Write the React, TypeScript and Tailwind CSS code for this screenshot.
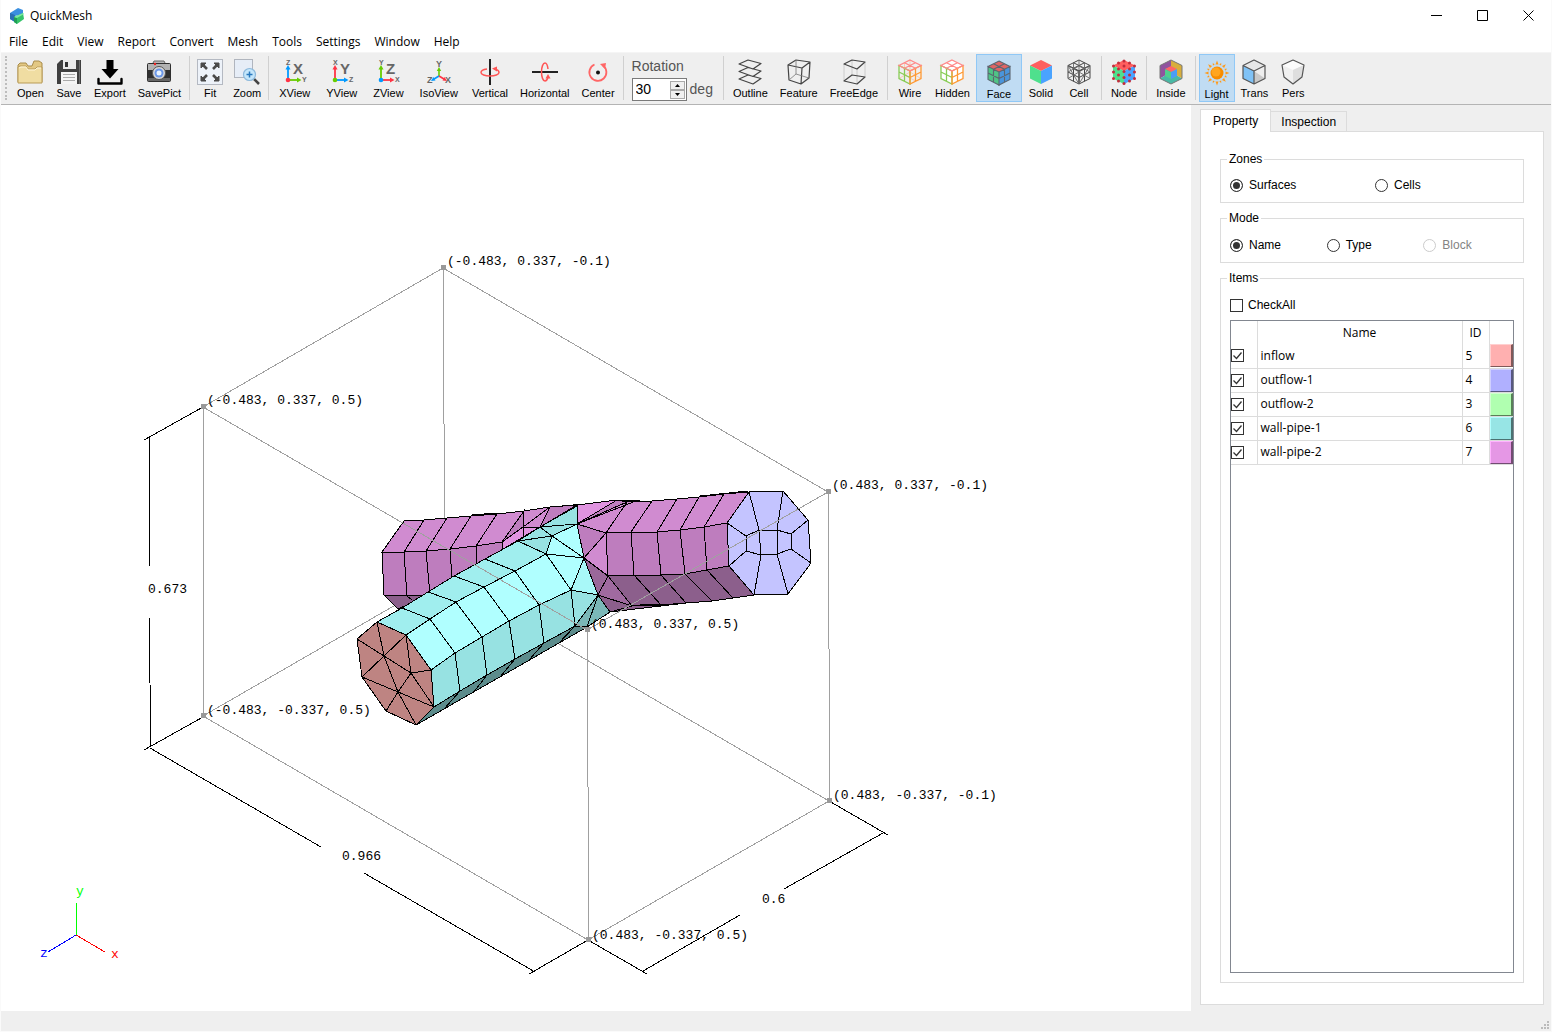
import { useState } from "react";
import type { ReactNode } from "react";
import clsx from "clsx";

const menus = ["File", "Edit", "View", "Report", "Convert", "Mesh", "Tools", "Settings", "Window", "Help"];

function Icon({ children }: { children: ReactNode }) {
  return (
    <svg viewBox="0 0 26 26" className="size-[26px] shrink-0" fill="none" aria-hidden>
      {children}
    </svg>
  );
}

/* ---------- file icons ---------- */

function OpenIcon() {
  return (
    <Icon>
      <path d="M1 23V6l2-2h6l2 3h4l2-5h5l3 2v19z" fill="#e3c883" stroke="#a98c4a" />
      <path d="M1 24V8l2-1h6l2 3h7l2-2h5v16z" fill="#f0dda2" stroke="#b99b57" />
      <path d="M2 9l2-1h5l2 3h7l2-2h4" stroke="#fff6d8" />
    </Icon>
  );
}

function SaveIcon() {
  return (
    <Icon>
      <path d="M5 1h20v24H1V5z" fill="#3f3f3f" />
      <path d="M7 1h13v9H7z" fill="#e9e9e9" />
      <path d="M9 3h3v5H9z" fill="#333" />
      <path d="M5 13h16v12H5z" fill="#f4f4f4" />
      <path d="M7 15.500h12M7 18.500h12M7 21.500h12" stroke="#aaa" />
      <path d="M23.500 1v24" stroke="#6a6a6a" />
    </Icon>
  );
}

function ExportIcon() {
  return (
    <Icon>
      <path d="M9.500 1h7v9h5L13 19.500 4.500 10h5z" fill="#000" />
      <path d="M1.500 20v4.500h23V20" stroke="#000" strokeWidth="2.400" strokeLinejoin="round" strokeLinecap="round" />
    </Icon>
  );
}

function CameraIcon() {
  return (
    <Icon>
      <path d="M8 2h10l2 4H6z" fill="#b8b8b8" stroke="#666" />
      <rect x="1" y="4" width="24" height="19" rx="2" fill="#2f2f2f" />
      <path d="M2 5h22v6H2z" fill="#b2b2b2" />
      <path d="M2 19h22v3H2z" fill="#666" />
      <circle cx="13" cy="14" r="6.500" fill="#d8d8d8" stroke="#555" />
      <circle cx="13" cy="14" r="4.500" fill="#6b97e8" />
      <circle cx="13" cy="14" r="2.500" fill="#e8f3ff" />
      <circle cx="9" cy="5" r="1.200" fill="#e22" />
    </Icon>
  );
}

function FitIcon() {
  return (
    <Icon>
      <rect x="0.500" y="0.500" width="25" height="25" fill="#edf2f9" stroke="#b4b9c2" />
      <g fill="#4a4a4a" stroke="#4a4a4a">
        <path d="M5 5l5 5M21 5l-5 5M5 21l5-5M21 21l-5-5" strokeWidth="2.600" />
        <path d="M4 4h5L4 9zM22 4v5l-5-5zM4 22v-5l5 5zM22 22h-5l5-5z" />
      </g>
    </Icon>
  );
}

function ZoomIcon() {
  return (
    <Icon>
      <rect x="0.500" y="0.500" width="18" height="18" fill="#e6edf7" stroke="#b0b5be" />
      <path d="M20 20l5 5" stroke="#444" strokeWidth="2.500" />
      <circle cx="15.500" cy="15.500" r="6" fill="#c4e6fb" stroke="#8db9dc" strokeWidth="1.200" />
      <path d="M15.500 12.500v6M12.500 15.500h6" stroke="#2878bd" strokeWidth="1.500" />
    </Icon>
  );
}

/* ---------- view icons ---------- */

function AxisIcon({ up, main, side, upColor, sideColor, dot }: { up: string; main: string; side: string; upColor: string; sideColor: string; dot: string }) {
  return (
    <Icon>
      <path d="M6 20V9" stroke={upColor} strokeWidth="1.800" />
      <path d="M6 6l2.500 4.500h-5z" fill={upColor} />
      <path d="M6 21h10" stroke={sideColor} strokeWidth="1.800" />
      <path d="M19.500 21L15 18.500v5z" fill={sideColor} />
      <circle cx="6" cy="21" r="2.300" fill={dot} />
      <g fill="#666" fontFamily="Liberation Sans, sans-serif" fontWeight="bold">
        <text x="4" y="6" fontSize="7">{up}</text>
        <text x="11" y="15" fontSize="15">{main}</text>
        <text x="20" y="23" fontSize="7">{side}</text>
      </g>
    </Icon>
  );
}

function IsoIcon() {
  return (
    <Icon>
      <path d="M13 17V11" stroke="#6c0" strokeWidth="1.600" />
      <path d="M13 8l2.200 4h-4.400z" fill="#6c0" />
      <path d="M13 17l-5 3" stroke="#09f" strokeWidth="1.600" />
      <path d="M5 22l2.500-4 2 3.500z" fill="#09f" />
      <path d="M13 17l5 3" stroke="#f34" strokeWidth="1.600" />
      <path d="M21 22l-2.500-4-2 3.500z" fill="#f34" />
      <g fill="#666" fontFamily="Liberation Sans, sans-serif" fontWeight="bold" fontSize="9">
        <text x="10" y="8">Y</text>
        <text x="1" y="24">Z</text>
        <text x="19" y="24">X</text>
      </g>
    </Icon>
  );
}

function VerticalIcon() {
  return (
    <Icon>
      <path d="M13 0v26" stroke="#222" strokeWidth="2" />
      <path d="M10 10c-4 .5-6 2-6 3.500 0 2 4 3.500 9 3.500s9-1.500 9-3.500c0-1.500-2-3-5-3.500" stroke="#f55" strokeWidth="1.500" />
      <path d="M15 9.500l5-2v5z" fill="#f55" />
    </Icon>
  );
}

function HorizontalIcon() {
  return (
    <Icon>
      <path d="M0 13h26" stroke="#222" strokeWidth="2" />
      <path d="M16 10c-.5-4-1.500-6-3-6-2 0-3.500 4-3.500 9s1.500 9 3.500 9c1.500 0 2.500-2 3-4" stroke="#f55" strokeWidth="1.500" />
      <path d="M16 15l2.500 4.500h-5z" fill="#f55" />
    </Icon>
  );
}

function CenterIcon() {
  return (
    <Icon>
      <path d="M9.500 5.500A8.500 8.500 0 1 0 18 6.500" stroke="#f66" strokeWidth="1.800" />
      <path d="M15 5l6-1-1 6z" fill="#f66" />
      <circle cx="13" cy="13.500" r="2" fill="#111" />
    </Icon>
  );
}

/* ---------- display icons ---------- */

function OutlineIcon() {
  return (
    <Icon>
      <g stroke="#444" strokeWidth="1.200" strokeLinejoin="round">
        <path d="M2 5l9-4 13 3.500L16 10zM2 12.500l9-4 13 3.500-8 5.500zM2 20l9-4 13 3.500-8 5.500z" />
      </g>
    </Icon>
  );
}

function FeatureIcon() {
  return (
    <Icon>
      <g stroke="#444" strokeWidth="1.200" strokeLinejoin="round">
        <path d="M2 6l8-5 14 2-1 16-8 6-12-4zM2 6l14 3 8-6M16 9l-1 16" />
        <path d="M10 1v14l13 4M10 15l-7 6" stroke="#777" strokeWidth="0.800" />
      </g>
    </Icon>
  );
}

function FreeEdgeIcon() {
  return (
    <Icon>
      <path d="M3 5v17M24 3v15M16 10v15M11 1v15" stroke="#c4c4c4" strokeWidth="0.800" />
      <path d="M3 5l8-4 13 2-8 7zM3 22l8-6 13 2-8 7z" stroke="#444" strokeWidth="1.200" strokeLinejoin="round" />
    </Icon>
  );
}

const TOP = "M13 1l11 5.500L13 12 2 6.500z";
const LEFT = "M2 6.500L13 12v13L2 19.500z";
const RIGHT = "M24 6.500L13 12v13l11-5.500z";
const TOP_GRID = "M7.500 3.750l11 5.500M18.500 3.750l-11 5.500";
const LEFT_GRID = "M2 13l11 5.500M7.500 9.250v13";
const RIGHT_GRID = "M24 13l-11 5.500M18.500 9.250v13";

function WireIcon({ hidden }: { hidden?: boolean }) {
  return (
    <Icon>
      {hidden ? <path d="M13 1l11 5.500v13L13 25 2 19.500v-13z" fill="#fff" /> : null}
      {hidden ? null : <path d="M13 1v12l11 6.500M13 13L2 19.500M7.500 4v12l11 6" stroke="#fb9" strokeWidth="0.700" />}
      <path d={LEFT + LEFT_GRID} stroke="#8c5" strokeWidth="1.300" />
      <path d={RIGHT + RIGHT_GRID} stroke="#f93" strokeWidth="1.300" />
      <path d={TOP + TOP_GRID} stroke="#f88" strokeWidth="1.300" />
    </Icon>
  );
}

const nodePoints = [
  [13, 2], [7.5, 4], [18.5, 4], [2.5, 7], [13, 7], [23.5, 7],
  [7.5, 10], [18.5, 10], [13, 12.5], [2.5, 13], [23.5, 13], [7.5, 16],
  [18.5, 16], [13, 18.5], [2.5, 19.5], [23.5, 19.5], [7.5, 22], [18.5, 22], [13, 24.5],
];

function SolidCube({ grid, nodes }: { grid?: boolean; nodes?: boolean }) {
  return (
    <Icon>
      <path d={TOP} fill={grid ? "#e06464" : "#ff5f5f"} />
      <path d={LEFT} fill={grid ? "#4fc486" : "#4fe08d"} />
      <path d={RIGHT} fill={grid ? "#4a95dc" : "#4aa3ff"} />
      {grid ? <path d={TOP + LEFT + RIGHT + TOP_GRID + LEFT_GRID + RIGHT_GRID} stroke="#5b6670" strokeWidth="1.100" /> : null}
      {nodes ? (
        <g fill="#c22d3c">
          {nodePoints.map(([x, y]) => (
            <circle key={`${x}-${y}`} cx={x} cy={y} r="1.500" />
          ))}
        </g>
      ) : null}
    </Icon>
  );
}

function CellIcon() {
  return (
    <Icon>
      <path d={TOP + LEFT + RIGHT + TOP_GRID + LEFT_GRID + RIGHT_GRID} stroke="#444" strokeWidth="1" />
      <path d="M13 1v24M2 6.500L24 19.500M24 6.500L2 19.500M7.500 3.750v5.500M18.500 3.750v5.500M2 13l11-6 11 6M2 6.500l5.500 9.250L13 25l5.500-9.250L24 6.500" stroke="#666" strokeWidth="0.900" />
    </Icon>
  );
}

function InsideIcon() {
  return (
    <Icon>
      <path d="M2 6.500L13 1v12L2 19.500z" fill="#90539e" />
      <path d="M24 6.500L13 1v12l11 6.500z" fill="#d8ae3c" />
      <path d="M2 19.500L13 13l11 6.500L13 25z" fill="#48b9a5" />
      <path d="M13 7l6 3-6 3-6-3z" fill="#f66" />
      <path d="M7 10l6 3v7l-6-3z" fill="#4fd08d" />
      <path d="M19 10l-6 3v7l6-3z" fill="#4a9df5" />
      <path d="M13 1l11 5.500v13L13 25 2 19.500v-13z" stroke="#777" />
    </Icon>
  );
}

function LightIcon() {
  return (
    <Icon>
      <g fill="#ff9a1a">
        {Array.from({ length: 16 }, (_, i) => (
          <path key={i} d={i % 2 ? "M12 4.500L13 2l1 2.500z" : "M11.500 4.500L13 0.500l1.500 4z"} transform={`rotate(${i * 22.5} 13 13)`} />
        ))}
      </g>
      <circle cx="13" cy="13" r="6.500" fill="#f78c00" />
      <circle cx="12" cy="12" r="4.500" fill="#ffa51f" />
    </Icon>
  );
}

function TransIcon() {
  return (
    <Icon>
      <path d={TOP} fill="#e7e7e7" />
      <path d={LEFT} fill="#7fc2f6" />
      <path d={RIGHT} fill="#c9c9c9" />
      <path d="M13 12l11-5.500v13z" fill="#eee" />
      <path d={TOP + LEFT + RIGHT} stroke="#555" strokeWidth="1.200" strokeLinejoin="round" />
    </Icon>
  );
}

function PersIcon() {
  return (
    <Icon>
      <path d="M13 1l11 5-2 12-9 7-9-7L2 6z" fill="#f0f0f0" />
      <path d="M2 6l11-5 11 5-11 5z" fill="#fcfcfc" />
      <path d="M13 11v14l9-7 2-12z" fill="#dedede" />
      <path d="M13 1l11 5-2 12-9 7-9-7L2 6z" stroke="#555" strokeWidth="1.200" strokeLinejoin="round" />
    </Icon>
  );
}

type Tool = { label: string; icon: ReactNode; pad?: string };

const fileTools: Tool[] = [
  { label: "Open", icon: <OpenIcon /> },
  { label: "Save", icon: <SaveIcon /> },
  { label: "Export", icon: <ExportIcon /> },
  { label: "SavePict", icon: <CameraIcon /> },
];
const zoomTools: Tool[] = [
  { label: "Fit", icon: <FitIcon />, pad: "px-[4px]" },
  { label: "Zoom", icon: <ZoomIcon />, pad: "px-[4px]" },
];
const viewTools: Tool[] = [
  { label: "XView", icon: <AxisIcon up="Z" main="X" side="Y" upColor="#09f" sideColor="#6c0" dot="#f34" />, pad: "px-[7px]" },
  { label: "YView", icon: <AxisIcon up="X" main="Y" side="Z" upColor="#f34" sideColor="#09f" dot="#6c0" />, pad: "px-[7px]" },
  { label: "ZView", icon: <AxisIcon up="Y" main="Z" side="X" upColor="#6c0" sideColor="#f34" dot="#09f" />, pad: "px-[7px]" },
  { label: "IsoView", icon: <IsoIcon />, pad: "px-[7px]" },
  { label: "Vertical", icon: <VerticalIcon /> },
  { label: "Horizontal", icon: <HorizontalIcon /> },
  { label: "Center", icon: <CenterIcon /> },
];
const edgeTools: Tool[] = [
  { label: "Outline", icon: <OutlineIcon /> },
  { label: "Feature", icon: <FeatureIcon /> },
  { label: "FreeEdge", icon: <FreeEdgeIcon /> },
];
const faceTools: Tool[] = [
  { label: "Wire", icon: <WireIcon /> },
  { label: "Hidden", icon: <WireIcon hidden /> },
  { label: "Face", icon: <SolidCube grid />, pad: "px-[9px]" },
  { label: "Solid", icon: <SolidCube /> },
  { label: "Cell", icon: <CellIcon /> },
];
const lightTools: Tool[] = [
  { label: "Light", icon: <LightIcon />, pad: "px-[4px]" },
  { label: "Trans", icon: <TransIcon /> },
  { label: "Pers", icon: <PersIcon /> },
];

function ToolGroup({ tools, active, onPick }: { tools: Tool[]; active?: string; onPick?: (label: string) => void }) {
  return (
    <div className="flex">
      {tools.map((tool) => (
        <button
          key={tool.label}
          type="button"
          onClick={() => onPick?.(tool.label)}
          className={clsx(
            "flex h-[48px] flex-col items-center border text-[11px] leading-4",
            tool.pad ?? "px-[5px]",
            active === tool.label ? "border-[#90c8f6] bg-[#c0dcf3] pt-[5px]" : "border-transparent pt-[4px]",
          )}
        >
          {tool.icon}
          <span>{tool.label}</span>
        </button>
      ))}
    </div>
  );
}

function Separator({ tight }: { tight?: boolean }) {
  return <span className={clsx("h-[44px] w-px shrink-0 bg-[#d0d0d0]", tight ? "mx-[2px]" : "mx-[3px]")} aria-hidden />;
}

function RotationField() {
  const [angle, setAngle] = useState(30);

  return (
    <div className="flex flex-col pr-[7px] pl-[6px] text-[14px] text-[#555]">
      <label htmlFor="rotation" className="leading-[24px]">Rotation</label>
      <div className="flex items-center gap-[3px]">
        <div className="flex h-[23px] w-[55px] items-center border border-[#7a7a7a] bg-white pr-px">
          <input
            id="rotation"
            value={angle}
            onChange={(e) => setAngle(Number(e.target.value) || 0)}
            className="w-0 min-w-0 flex-1 pl-[3px] text-[14px] text-black outline-none"
          />
          <div className="flex w-[15px] flex-col">
            <button type="button" aria-label="Increase" onClick={() => setAngle(angle + 1)} className="flex h-[9px] items-center justify-center border border-[#aaa] bg-[#f0f0f0]">
              <svg viewBox="0 0 5 3" className="h-[3px] w-[5px]"><path d="M0 3h5L2.500 0z" /></svg>
            </button>
            <button type="button" aria-label="Decrease" onClick={() => setAngle(angle - 1)} className="flex h-[9px] items-center justify-center border border-[#aaa] bg-[#f0f0f0]">
              <svg viewBox="0 0 5 3" className="h-[3px] w-[5px]"><path d="M0 0h5L2.500 3z" /></svg>
            </button>
          </div>
        </div>
        <span>deg</span>
      </div>
    </div>
  );
}

function Toolbar() {
  const [shading, setShading] = useState("Face");
  const [light, setLight] = useState("Light");

  return (
    <div className="flex h-[53px] items-center border-t border-b border-t-[#f5f5f5] border-b-[#b4b4b4] bg-[#efefef] pb-[2px] pl-[4px]">
      <span className="mr-[4px] h-[44px] border-l-[2px] border-dotted border-[#bdbdbd]" aria-hidden />
      <ToolGroup tools={fileTools} />
      <Separator tight />
      <ToolGroup tools={zoomTools} />
      <Separator tight />
      <ToolGroup tools={viewTools} />
      <Separator tight />
      <RotationField />
      <Separator />
      <ToolGroup tools={edgeTools} />
      <Separator />
      <ToolGroup tools={faceTools} active={shading} onPick={setShading} />
      <Separator />
      <ToolGroup tools={[{ label: "Node", icon: <SolidCube nodes /> }]} />
      <Separator />
      <ToolGroup tools={[{ label: "Inside", icon: <InsideIcon /> }]} />
      <Separator />
      <ToolGroup tools={lightTools} active={light} onPick={setLight} />
    </div>
  );
}

/* ---------- mesh view ---------- */

const PINK = "#d08bd0";
const PLUM = "#be7dbe";
const DUSK = "#8c5f8c";
const ROSE = "#e094e0";
const SKY = "#b0ffff";
const AQUA = "#a0eeee";
const TEAL = "#97e2e2";

// quads between two rows of vertices
function strip(a: number[][], b: number[][], fill: string) {
  return a.slice(1).map((p, i) => ({ fill, pts: [a[i], p, b[i + 1], b[i]] }));
}

const leftTop = [[404, 521], [424, 520], [447, 518], [471, 516], [497, 514], [524, 511]];
const leftMid = [[382, 552], [404, 552], [426, 551], [450, 549], [476, 546], [502, 542]];
const leftLow = [[384, 595], [407, 596], [430, 595], [453, 592], [478, 588], [504, 584]];

const rightTop = [[627, 502], [652, 501], [677, 499], [699, 497], [724, 494], [749, 492]];
const rightMid = [[606, 533], [631, 532], [657, 532], [680, 530], [704, 527], [727, 523]];
const rightLow = [[608, 576], [634, 575], [661, 575], [685, 574], [707, 570], [729, 566]];
const rightEnd = [[632, 606], [661, 605], [686, 603], [712, 601], [733, 598], [754, 595]];

const pipeA = [[377, 622], [402, 608], [428, 592], [454, 576], [485, 559], [518, 541]];
const pipeB = [[406, 635], [430, 619], [456, 602], [484, 587], [515, 571], [546, 554]];
const pipeC = [[431, 670], [455, 653], [482, 637], [509, 621], [539, 605], [571, 590]];
const pipeD = [[434, 707], [460, 691], [487, 675], [515, 659], [544, 643], [575, 626]];

const faces = [
  { fill: DUSK, pts: [[384, 595], [430, 595], [398, 609]] },
  ...strip(leftTop, leftMid, PINK),
  ...strip(leftMid, leftLow, PLUM),
  { fill: PLUM, pts: [[524, 511], [523, 527], [502, 542]] },
  { fill: PINK, pts: [[524, 511], [550, 507], [523, 527]] },
  { fill: PINK, pts: [[550, 507], [540, 527], [523, 527]] },
  { fill: PLUM, pts: [[550, 507], [577, 505], [540, 527]] },
  { fill: ROSE, pts: [[502, 542], [523, 527], [540, 527], [503, 549]] },
  { fill: PLUM, pts: [[577, 505], [617, 500], [640, 500], [627, 502]] },
  { fill: ROSE, pts: [[577, 505], [617, 500], [577, 524]] },
  { fill: PLUM, pts: [[617, 500], [627, 502], [577, 524]] },
  { fill: PINK, pts: [[627, 502], [606, 533], [577, 524]] },
  { fill: PLUM, pts: [[577, 524], [606, 533], [584, 558]] },
  { fill: PINK, pts: [[606, 533], [608, 576], [584, 558]] },
  { fill: "#9a689a", pts: [[584, 558], [608, 576], [598, 595]] },
  { fill: "#a06aa0", pts: [[598, 595], [608, 576], [632, 606]] },
  { fill: DUSK, pts: [[598, 595], [632, 606], [610, 612]] },
  { fill: DUSK, pts: [[610, 612], [632, 606], [754, 595]] },
  ...strip(rightTop, rightMid, PINK),
  ...strip(rightMid, rightLow, PLUM),
  ...strip(rightLow, rightEnd, DUSK),
  { fill: TEAL, pts: [[540, 527], [577, 506], [577, 524]] },
  { fill: TEAL, pts: [[540, 527], [577, 524], [552, 536]] },
  { fill: TEAL, pts: [[518, 541], [540, 527], [552, 536]] },
  { fill: TEAL, pts: [[518, 541], [552, 536], [546, 554]] },
  { fill: SKY, pts: [[552, 536], [577, 524], [584, 558]] },
  { fill: SKY, pts: [[552, 536], [584, 558], [546, 554]] },
  { fill: SKY, pts: [[546, 554], [584, 558], [571, 590]] },
  { fill: "#a8f8f8", pts: [[584, 558], [598, 595], [571, 590]] },
  { fill: TEAL, pts: [[571, 590], [598, 595], [575, 626]] },
  { fill: "#7ab8b8", pts: [[598, 595], [610, 612], [587, 627]] },
  { fill: "#7ab8b8", pts: [[598, 595], [587, 627], [575, 626]] },
  ...strip(pipeA, pipeB, AQUA),
  ...strip(pipeB, pipeC, SKY),
  ...strip(pipeC, pipeD, TEAL),
  { fill: "#5c8c8c", pts: [[416, 725], [434, 707], [460, 691], [487, 675], [515, 659], [544, 643], [575, 626], [587, 627]] },
  { fill: "#be8482", pts: [[377, 622], [406, 635], [431, 670], [434, 707], [416, 725], [386, 711], [362, 677], [357, 639]] },
  { fill: "#c4c4ff", pts: [[749, 492], [783, 491], [808, 520], [811, 563], [788, 594], [754, 595], [729, 566], [727, 523]] },
];

const meshEdges = [
  "M407 596l5 4M523 527v10M577 524l59-23M472 515l25-2M550 507l35-3M700 496l48-5M640 605l25-1",
  "M384 656L377 622M384 656L357 639M384 656L362 677M384 656L406 635M384 656L411 673M384 656L398 692",
  "M411 673L406 635M411 673L431 670M411 673L434 707M411 673L398 692",
  "M398 692L362 677M398 692L386 711M398 692L416 725M398 692L434 707",
  "M444 709l16-18M473 693l14-18M500 677l15-18M529 660l15-17M558 644l17-18",
  "M746 536l13-6h18l14 4v15l-14 5-16 1-15-4zM759 530l2 25M777 530v24",
  "M746 536L727 523M759 530L749 492M777 530L783 491M791 534L808 520M791 549L811 563M777 554L788 594M761 555L754 595M746 551L729 566",
];

const corners = [[443, 268], [203, 407], [828, 492], [587, 630], [203, 716], [829, 801], [588, 940]];

const captions: [number, number, string][] = [
  [447, 265, "(-0.483, 0.337, -0.1)"],
  [207, 404, "(-0.483, 0.337, 0.5)"],
  [832, 489, "(0.483, 0.337, -0.1)"],
  [591, 628, "(0.483, 0.337, 0.5)"],
  [207, 714, "(-0.483, -0.337, 0.5)"],
  [833, 799, "(0.483, -0.337, -0.1)"],
  [592, 939, "(0.483, -0.337, 0.5)"],
  [148, 593, "0.673"],
  [342, 860, "0.966"],
  [762, 903, "0.6"],
];

function MeshView() {
  return (
    <main className="min-w-0 flex-1 bg-white">
      <svg viewBox="1 105 1190 906" className="size-full" fill="none" role="img" aria-label="Mesh view">
        <g shapeRendering="crispEdges">
          <path d="M443.500 268L444.500 577M444 577L203 716M444 577L829 801" stroke="#a0a0a0" />
          {faces.map((face, i) => (
            <polygon key={i} points={face.pts.map((p) => p.join(",")).join(" ")} fill={face.fill} stroke="#000" />
          ))}
          {meshEdges.map((d) => (
            <path key={d} d={d} stroke="#000" />
          ))}
          <path
            d="M443 268L203 407M443 268L828 492M203 407L587 630M828 492L587 630M203.500 407V716M828.500 492L829.500 801M587.500 630L588.500 940M203 716L588 940L829 801"
            stroke="#a0a0a0"
          />
          <path
            d="M203 407L144 440M203 717L144 750M149.500 437V566M149.500 618L150.500 747M150 748L321 847M364 873L535 972M588 940L529 974M588 940L647 974M643 971L740 915M784 889L883 833M829 801L888 835"
            stroke="#000"
          />
          {corners.map(([x, y]) => (
            <rect key={`${x}-${y}`} x={x - 2} y={y - 3} width="5" height="5" fill="#999" />
          ))}
          <path d="M76.500 935V903" stroke="#0f0" />
          <path d="M76 935L105 952" stroke="#f00" />
          <path d="M76 935L48 952" stroke="#00f" />
        </g>
        <g fontFamily="Liberation Mono, monospace" fontSize="13">
          {captions.map(([x, y, text]) => (
            <text key={text} x={x} y={y} fill="#000">{text}</text>
          ))}
          <text x="76" y="895" fill="#0f0">y</text>
          <text x="111" y="958" fill="#f00">x</text>
          <text x="40" y="957" fill="#00f">z</text>
        </g>
      </svg>
    </main>
  );
}

/* ---------- side panel ---------- */

function Group({ title, className, children }: { title: string; className?: string; children: ReactNode }) {
  return (
    <fieldset className={clsx("min-w-0 border border-[#dcdcdc] px-[9px] pb-[9px]", className)}>
      <legend className="-ml-[3px] px-[2px] leading-4">{title}</legend>
      {children}
    </fieldset>
  );
}

function Radio({ name, label, disabled, defaultChecked }: { name: string; label: string; disabled?: boolean; defaultChecked?: boolean }) {
  return (
    <label className={clsx("flex items-center gap-[6px] leading-4", disabled && "text-[#838383]")}>
      <input
        type="radio"
        name={name}
        disabled={disabled}
        defaultChecked={defaultChecked}
        className="size-[13px] appearance-none rounded-full border border-[#333] bg-white checked:bg-[#333] checked:shadow-[inset_0_0_0_2px_white] disabled:border-[#ccc]"
      />
      {label}
    </label>
  );
}

function Tick({ id, label, checked, onChange }: { id: string; label?: string; checked: boolean; onChange: () => void }) {
  return (
    <span className="relative block size-[13px] shrink-0">
      <input
        id={id}
        type="checkbox"
        aria-label={label}
        checked={checked}
        onChange={onChange}
        className="block size-[13px] appearance-none border border-[#333] bg-white"
      />
      {checked ? (
        <svg viewBox="0 0 13 13" className="pointer-events-none absolute inset-0" fill="none" aria-hidden>
          <path d="M2.500 6.500l3 3 5-6" stroke="#333" strokeWidth="1.300" />
        </svg>
      ) : null}
    </span>
  );
}

const items = [
  { name: "inflow", id: 5, color: "bg-[#ffb0b0] border-t-[#ffd0d0] border-l-[#ffd0d0] border-r-[#805858] border-b-[#805858]" },
  { name: "outflow-1", id: 4, color: "bg-[#b0b0ff] border-t-[#d0d0ff] border-l-[#d0d0ff] border-r-[#585880] border-b-[#585880]" },
  { name: "outflow-2", id: 3, color: "bg-[#b0ffb0] border-t-[#d0ffd0] border-l-[#d0ffd0] border-r-[#588058] border-b-[#588058]" },
  { name: "wall-pipe-1", id: 6, color: "bg-[#97e5e5] border-t-[#b4ffff] border-l-[#b4ffff] border-r-[#4b7272] border-b-[#4b7272]" },
  { name: "wall-pipe-2", id: 7, color: "bg-[#e597e5] border-t-[#ffb4ff] border-l-[#ffb4ff] border-r-[#724b72] border-b-[#724b72]" },
];

function ItemsTable() {
  const [checked, setChecked] = useState(items.map(() => true));

  return (
    <table className="w-full table-fixed border-collapse font-['Open_Sans','Noto_Sans',sans-serif]">
      <colgroup>
        <col className="w-[26px]" />
        <col />
        <col className="w-[27px]" />
        <col className="w-[24px]" />
      </colgroup>
      <thead>
        <tr className="h-[23px]">
          <th className="border-r border-[#dcdcdc]" />
          <th className="border-r border-[#dcdcdc] font-normal">Name</th>
          <th className="border-r border-[#dcdcdc] font-normal">ID</th>
          <th />
        </tr>
      </thead>
      <tbody>
        {items.map((item, i) => (
          <tr key={item.id} className="h-[24px] border-b border-[#dcdcdc]">
            <td className="border-r border-[#dcdcdc] p-0">
              <Tick
                id={`item-${item.id}`}
                label={item.name}
                checked={checked[i]}
                onChange={() => setChecked(checked.map((c, n) => (n === i ? !c : c)))}
              />
            </td>
            <td className="border-r border-[#dcdcdc] py-0 pl-[3px]">{item.name}</td>
            <td className="border-r border-[#dcdcdc] py-0 pl-[3px]">{item.id}</td>
            <td className="p-0">
              <button type="button" aria-label={`${item.name} color`} className={clsx("block h-[23px] w-[23px] border border-r-2", item.color)} />
            </td>
          </tr>
        ))}
      </tbody>
    </table>
  );
}

function SidePanel() {
  const [tab, setTab] = useState("Property");
  const [all, setAll] = useState(false);

  return (
    <aside className="flex w-[360px] shrink-0 flex-col bg-[#efefef] pt-1 pr-[7px] pb-[6px] pl-[9px] text-[12px]">
      <div className="flex items-end" role="tablist">
        {["Property", "Inspection"].map((name) => (
          <button
            key={name}
            type="button"
            role="tab"
            aria-selected={tab === name}
            onClick={() => setTab(name)}
            className={clsx(
              "border border-b-0 border-[#dcdcdc] leading-4",
              tab === name ? "relative -mb-px h-[23px] bg-white px-[12px]" : "h-[20px] border-l-0 px-[10px]",
            )}
          >
            {name}
          </button>
        ))}
      </div>
      <div className="flex flex-1 flex-col gap-[7px] border border-[#dcdcdc] bg-white px-[19px] pt-[19px] pb-[21px]">
        <Group title="Zones">
          <div className="grid grid-cols-2 gap-[6px] pt-[10px]">
            <Radio name="zones" label="Surfaces" defaultChecked />
            <Radio name="zones" label="Cells" />
          </div>
        </Group>
        <Group title="Mode">
          <div className="grid grid-cols-3 gap-[6px] pt-[11px]">
            <Radio name="mode" label="Name" defaultChecked />
            <Radio name="mode" label="Type" />
            <Radio name="mode" label="Block" disabled />
          </div>
        </Group>
        <Group title="Items" className="flex flex-1 flex-col">
          <div className="flex items-center gap-[5px] pt-[11px] pb-[7px]">
            <Tick id="check-all" checked={all} onChange={() => setAll(!all)} />
            <label htmlFor="check-all" className="leading-4">CheckAll</label>
          </div>
          <div className="flex-1 border border-[#828790]">
            <ItemsTable />
          </div>
        </Group>
      </div>
    </aside>
  );
}

/* ---------- window ---------- */

function TitleBar() {
  return (
    <header className="flex h-[31px] items-center pl-[8px]">
      <svg viewBox="0 0 16 16" className="size-[16px]" aria-hidden>
        <path d="M1 5l8-5 5 2v4L6 8v6l-5-3z" fill="#3a8fe0" />
        <path d="M1 5l5 2v7l-5-3z" fill="#2a6fb5" />
        <path d="M5 9l9-4 1 6-7 5-3-2z" fill="#35c46a" />
        <path d="M5 9l3 1v6l-3-2z" fill="#1f9e55" />
        <path d="M5 9l9-4 1 1-7 4z" fill="#7be8a0" />
      </svg>
      <h1 className="ml-[5px] flex-1">QuickMesh</h1>
      <button type="button" aria-label="Minimize" className="flex h-full w-[46px] items-center justify-center">
        <svg viewBox="0 0 11 11" className="size-[11px]" stroke="#000"><path d="M0 5.500h11" /></svg>
      </button>
      <button type="button" aria-label="Maximize" className="flex h-full w-[46px] items-center justify-center">
        <svg viewBox="0 0 11 11" className="size-[11px]" fill="none" stroke="#000"><path d="M0.500 0.500h10v10h-10z" /></svg>
      </button>
      <button type="button" aria-label="Close" className="flex h-full w-[46px] items-center justify-center">
        <svg viewBox="0 0 11 11" className="size-[11px]" stroke="#000"><path d="M0.500 0.500l10 10M10.500 0.500l-10 10" /></svg>
      </button>
    </header>
  );
}

export default function App() {
  return (
    <div className="flex h-screen flex-col border-x border-b border-[#fafafa] bg-white font-['Liberation_Sans',Arial,sans-serif] text-[12px] text-black">
      <div className="font-['Open_Sans','Noto_Sans',sans-serif]">
        <TitleBar />
        <nav className="flex h-[21px] items-center pl-px" aria-label="Main menu">
          {menus.map((menu) => (
            <button key={menu} type="button" className="px-[7px] leading-4">{menu}</button>
          ))}
        </nav>
      </div>
      <Toolbar />
      <div className="flex min-h-0 flex-1">
        <MeshView />
        <SidePanel />
      </div>
      <footer className="flex h-[20px] items-end justify-end bg-[#efefef] p-[2px]">
        <svg viewBox="0 0 8 8" className="size-[8px]" fill="#bbb" shapeRendering="crispEdges" aria-hidden>
          <path d="M6 0h2v2H6zM3 3h2v2H3zM6 3h2v2H6zM0 6h2v2H0zM3 6h2v2H3zM6 6h2v2H6z" />
        </svg>
      </footer>
    </div>
  );
}
